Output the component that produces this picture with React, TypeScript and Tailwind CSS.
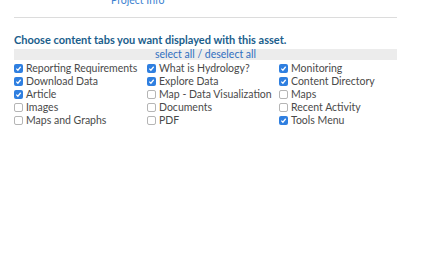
const items: [string, boolean][] = [
  ["Reporting Requirements", true],
  ["What is Hydrology?", true],
  ["Monitoring", true],
  ["Download Data", true],
  ["Explore Data", true],
  ["Content Directory", true],
  ["Article", true],
  ["Map - Data Visualization", false],
  ["Maps", false],
  ["Images", false],
  ["Documents", false],
  ["Recent Activity", false],
  ["Maps and Graphs", false],
  ["PDF", false],
  ["Tools Menu", true],
];

function Box({ checked }: { checked: boolean }) {
  if (checked) {
    return (
      <span className="w-[9px] h-[9px] rounded-[2px] bg-[#2f7fe0] flex items-center justify-center shrink-0">
        <svg width="7" height="7" viewBox="0 0 8 8">
          <path d="M1.5 4.2 L3.3 6 L6.5 2" fill="none" stroke="white" strokeWidth="1.4" />
        </svg>
      </span>
    );
  }
  return <span className="w-[9px] h-[9px] rounded-[2px] border border-[#b5b5b5] bg-white shrink-0" />;
}

export default function App() {
  return (
    <div className="w-[438px] h-[280px] bg-white font-['Lato',sans-serif] overflow-hidden">
      <div className="px-[14px] w-[411px]">
        <div className="h-[17px] relative">
          <span className="absolute left-[97px] top-[-7px] text-[10.5px] text-[#3b7fd0]">Project Info</span>
        </div>
        <div className="border-t border-[#dcdcdc]" />
        <h2 className="mt-[15px] text-[11px] font-bold text-[#1a5e8c] leading-[14px]">
          Choose content tabs you want displayed with this asset.
        </h2>
        <div className="mt-[2px] h-[11px] bg-[#ececec] flex items-center justify-center text-[10.5px] text-[#2f6fbf]">
          select all / deselect all
        </div>
        <div className="grid grid-cols-[133px_132px_1fr] mt-[2px]">
          {items.map(([label, checked]) => (
            <label key={label} className="flex items-center gap-[3px] h-[13px] text-[10.5px] text-[#4a4a4a]">
              <Box checked={checked} />
              <span>{label}</span>
            </label>
          ))}
        </div>
      </div>
    </div>
  );
}
